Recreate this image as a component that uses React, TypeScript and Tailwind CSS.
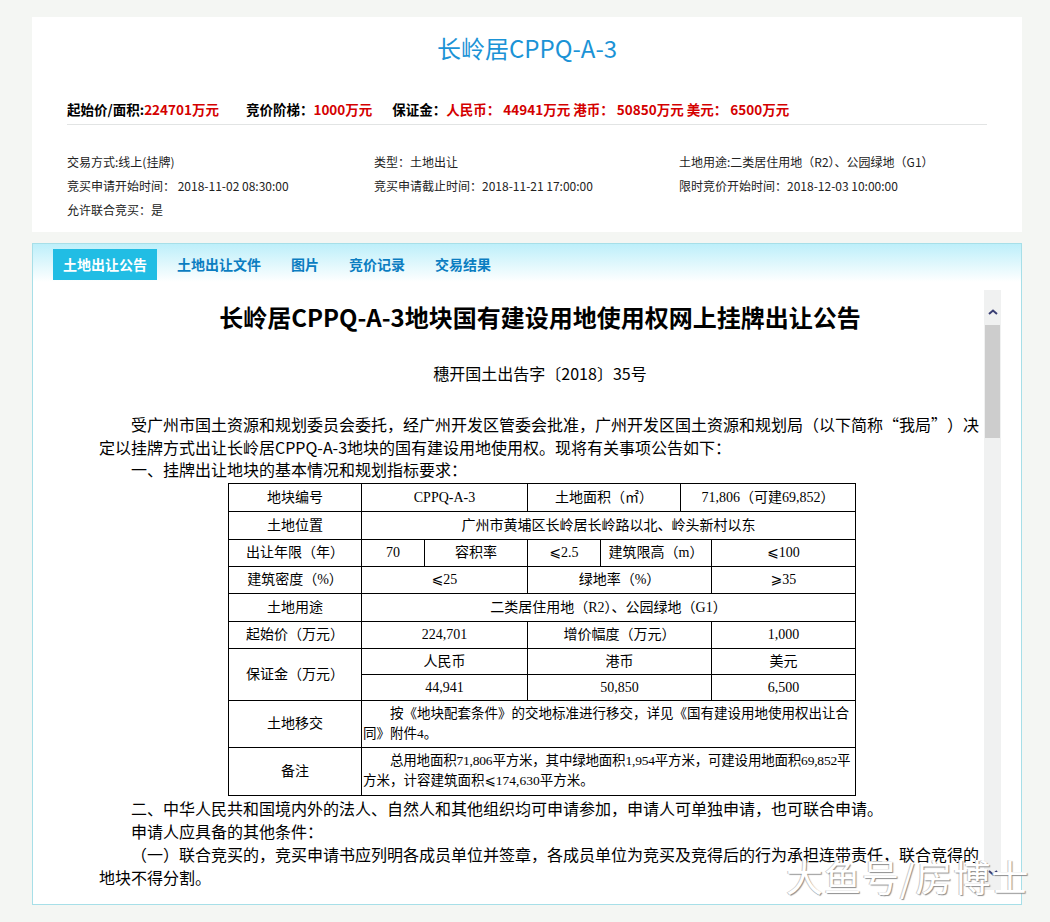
import * as React from 'react'

const tabs = ['土地出让公告', '土地出让文件', '图片', '竞价记录', '交易结果']

function Td({
	children,
	className = '',
	colSpan,
	rowSpan,
}: {
	children?: React.ReactNode
	className?: string
	colSpan?: number
	rowSpan?: number
}) {
	return (
		<td
			colSpan={colSpan}
			rowSpan={rowSpan}
			className={'border border-black p-0 text-center align-middle ' + className}
		>
			{children}
		</td>
	)
}

function Chevron({ down }: { down?: boolean }) {
	return (
		<svg width="10" height="6" viewBox="0 0 10 6" className={down ? 'rotate-180' : ''}>
			<path d="M1 5 L5 1.5 L9 5" fill="none" stroke="#3a3f74" strokeWidth="2" />
		</svg>
	)
}

function Scrollbar() {
	return (
		<div className="flex h-[600px] w-[17px] shrink-0 flex-col items-center bg-[#f0f1f1]">
			<div className="flex h-[35px] justify-center pt-[19px]">
				<Chevron />
			</div>
			<div className="h-[113px] w-[15px] bg-[#cdcdcd]" />
			<div className="flex-1" />
			<div className="flex h-[28px] justify-center pt-[8px]">
				<Chevron down />
			</div>
		</div>
	)
}

function LandTable() {
	return (
		<table className="ml-[129px] w-[627px] table-fixed border-collapse font-['Liberation_Serif','Noto_Sans_CJK_SC','DejaVu_Sans',serif] text-[14px] text-black">
			<colgroup>
				<col className="w-[133px]" />
				<col className="w-[63px]" />
				<col className="w-[103px]" />
				<col className="w-[73px]" />
				<col className="w-[80px]" />
				<col className="w-[31px]" />
				<col className="w-[144px]" />
			</colgroup>
			<tbody>
				<tr className="h-[28px]">
					<Td>地块编号</Td>
					<Td colSpan={2}>CPPQ-A-3</Td>
					<Td colSpan={2}>土地面积（㎡）</Td>
					<Td colSpan={2}>71,806（可建69,852）</Td>
				</tr>
				<tr className="h-[28px]">
					<Td>土地位置</Td>
					<Td colSpan={6}>广州市黄埔区长岭居长岭路以北、岭头新村以东</Td>
				</tr>
				<tr className="h-[27px]">
					<Td>出让年限（年）</Td>
					<Td>70</Td>
					<Td>容积率</Td>
					<Td>⩽2.5</Td>
					<Td colSpan={2}>建筑限高（m）</Td>
					<Td>⩽100</Td>
				</tr>
				<tr className="h-[27px]">
					<Td>建筑密度（%）</Td>
					<Td colSpan={2}>⩽25</Td>
					<Td colSpan={3}>绿地率（%）</Td>
					<Td>⩾35</Td>
				</tr>
				<tr className="h-[28px]">
					<Td>土地用途</Td>
					<Td colSpan={6}>二类居住用地（R2）、公园绿地（G1）</Td>
				</tr>
				<tr className="h-[27px]">
					<Td>起始价（万元）</Td>
					<Td colSpan={2}>224,701</Td>
					<Td colSpan={3}>增价幅度（万元）</Td>
					<Td>1,000</Td>
				</tr>
				<tr className="h-[26px]">
					<Td rowSpan={2}>保证金（万元）</Td>
					<Td colSpan={2}>人民币</Td>
					<Td colSpan={3}>港币</Td>
					<Td>美元</Td>
				</tr>
				<tr className="h-[26px]">
					<Td colSpan={2}>44,941</Td>
					<Td colSpan={3}>50,850</Td>
					<Td>6,500</Td>
				</tr>
				<tr className="h-[47px]">
					<Td>土地移交</Td>
					<Td colSpan={6} className="!text-left px-[1px] text-[13.5px] leading-[20px]">
						<div className="whitespace-nowrap pl-[2em]">
							按《地块配套条件》的交地标准进行移交，详见《国有建设用地使用权出让合
						</div>
						<div className="whitespace-nowrap">同》附件4。</div>
					</Td>
				</tr>
				<tr className="h-[48px]">
					<Td>备注</Td>
					<Td colSpan={6} className="!text-left px-[1px] text-[13.5px] leading-[20px]">
						<div className="whitespace-nowrap pl-[2em] tracking-[-0.2px]">
							总用地面积71,806平方米，其中绿地面积1,954平方米，可建设用地面积69,852平
						</div>
						<div className="whitespace-nowrap">方米，计容建筑面积⩽174,630平方米。</div>
					</Td>
				</tr>
			</tbody>
		</table>
	)
}

export default function App() {
	const [active, setActive] = React.useState(0)

	return (
		<div className="relative min-h-[922px] w-full bg-[#f4f6f3] pt-[17px] font-['Noto_Sans_CJK_SC',sans-serif]">
			{/* top info card */}
			<div className="ml-[32px] w-[990px] bg-white px-[35px] pt-[15px] pb-[10px]">
				<h1 className="text-center text-[24px] leading-[32px] text-[#1b93d6]">长岭居CPPQ-A-3</h1>
				<div className="mt-[35px] border-b border-[#e2e4e4] pb-[5px] text-[13.5px] leading-[20px] font-bold whitespace-pre text-black">
					<span>起始价/面积:</span>
					<span className="mr-[27px] text-[#d40000]">224701万元</span>
					<span>竞价阶梯：</span>
					<span className="mr-[20px] text-[#d40000]">1000万元</span>
					<span>保证金：</span>
					<span className="text-[#d40000]">人民币： 44941万元 港币： 50850万元 美元： 6500万元</span>
				</div>
				<div className="mt-[25px] grid grid-cols-[307px_305px_1fr] text-[12px] leading-[24px] text-[#222]">
					<div>交易方式:线上(挂牌)</div>
					<div>类型：土地出让</div>
					<div>土地用途:二类居住用地（R2）、公园绿地（G1）</div>
					<div>竞买申请开始时间： 2018-11-02 08:30:00</div>
					<div>竞买申请截止时间：2018-11-21 17:00:00</div>
					<div>限时竞价开始时间：2018-12-03 10:00:00</div>
					<div>允许联合竞买：是</div>
				</div>
			</div>

			{/* notice panel */}
			<div className="mt-[11px] ml-[32px] w-[990px] border border-[#a7dfe8] bg-[linear-gradient(#bdeffa_0px,#ffffff_38px)] pb-[14px]">
				<div className="flex gap-[10px] pt-[5px] pl-[20px]">
					{tabs.map((t, i) => (
						<button
							key={t}
							onClick={() => setActive(i)}
							className={
								'h-[31px] px-[10px] text-[14px] leading-[31px] font-bold ' +
								(i === active ? 'bg-[#21bde4] text-white' : 'text-[#0b7dc1]')
							}
						>
							{t}
						</button>
					))}
				</div>

				<div className="mt-[10px] flex">
					<div className="h-[600px] w-[949px] shrink-0 overflow-hidden pl-[66px] text-[16px] leading-[23px] text-black">
						<div className="w-[882px]">
							<h2 className="mt-[11px] text-center text-[24px] leading-[32px] font-bold">
								长岭居CPPQ-A-3地块国有建设用地使用权网上挂牌出让公告
							</h2>
							<p className="mt-[29px] text-center">穗开国土出告字〔2018〕35号</p>
							<p className="mt-[28px] indent-[2em] leading-[22.5px]">
								受广州市国土资源和规划委员会委托，经广州开发区管委会批准，广州开发区国土资源和规划局（以下简称
								<span className="inline-block w-[1em] indent-0 text-right">“</span>我局
								<span className="inline-block w-[1em] indent-0 text-left">”</span>）决
								<br />
								定以挂牌方式出让长岭居CPPQ-A-3地块的国有建设用地使用权。现将有关事项公告如下：
							</p>
							<p className="indent-[2em] leading-[22.5px]">一、挂牌出让地块的基本情况和规划指标要求：</p>
							<div className="mt-[2px]">
								<LandTable />
							</div>
							<p className="mt-[1px] indent-[2em]">
								二、中华人民共和国境内外的法人、自然人和其他组织均可申请参加，申请人可单独申请，也可联合申请。
							</p>
							<p className="indent-[2em]">申请人应具备的其他条件：</p>
							<p className="indent-[2em]">
								（一）联合竞买的，竞买申请书应列明各成员单位并签章，各成员单位为竞买及竞得后的行为承担连带责任，联合竞得的
								<br />
								地块不得分割。
							</p>
						</div>
					</div>
					<div className="ml-[2px]">
						<Scrollbar />
					</div>
				</div>
			</div>

			{/* watermark */}
			<div className="pointer-events-none absolute top-[852px] left-[786px] text-[37px] leading-[48px] font-normal tracking-[1px] text-white [text-shadow:1px_1px_1px_#8d8d8d,-1px_0_0_#c9c9c9]">
				大鱼号/房博士
			</div>
		</div>
	)
}
